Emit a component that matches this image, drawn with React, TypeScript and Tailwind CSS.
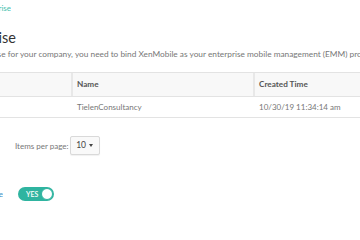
const font = "font-['Lato','Open_Sans',sans-serif]";

function Toggle() {
  return (
    <button className="flex h-[14px] w-[36px] items-center rounded-full bg-[#2fb4a0] pl-[8px] pr-[1px]">
      <span className="text-[7px] font-semibold leading-none text-white">YES</span>
      <span className="ml-auto size-[12px] rounded-full border border-[#2fb4a0] bg-white" />
    </button>
  );
}

export default function App() {
  return (
    <div className={`h-[240px] w-[360px] overflow-hidden bg-white text-[#666] ${font}`}>
      <div className="flex h-[16px] w-[11px] items-center justify-end overflow-hidden">
        <span className="whitespace-nowrap text-[8px] text-[#45bfae]">Settings &gt; Android Enterprise</span>
      </div>

      <div className="mt-[13px] flex h-[18px] w-[16px] items-center justify-end overflow-hidden">
        <h1 className="whitespace-nowrap text-[14.5px] leading-none text-[#333]">Android Enterprise</h1>
      </div>

      <p className="-ml-[88px] mt-[1px] h-[12px] whitespace-nowrap text-[8.3px] leading-[12px] text-[#777]">
        To use Android Enterprise for your company, you need to bind XenMobile as your enterprise mobile management (EMM) provider.
      </p>

      <div className="mt-[12px] text-[8px]">
        <div className="grid h-[25px] grid-cols-[71px_182px_1fr] border-y border-[#e3e3e3] bg-[#f8f8f8] text-[8.2px] font-bold text-[#555]">
          <div />
          <div className="flex items-center border-l-2 border-[#e8e8e8] pl-[4px]">Name</div>
          <div className="flex items-center border-l-2 border-[#e8e8e8] pl-[4px]">Created Time</div>
        </div>
        <div className="grid h-[21px] grid-cols-[73px_182px_1fr] border-b border-[#e3e3e3] text-[#777]">
          <div />
          <div className="flex items-center pl-[4px]">TielenConsultancy</div>
          <div className="flex items-center pl-[4px]">10/30/19 11:34:14 am</div>
        </div>
      </div>

      <div className="mt-[18px] flex items-center pl-[15px] text-[8px]">
        <span className="text-[#777]">Items per page:</span>
        <button className="ml-[1px] flex h-[19px] w-[30px] items-center justify-center gap-[3px] rounded-[2px] border border-[#d9d9d9] bg-[#f9f9f9] text-[8.5px] text-[#444] shadow-[0_1px_1px_rgba(0,0,0,0.06)]">
          10
          <span className="border-x-[2.5px] border-t-[3px] border-x-transparent border-t-[#444]" />
        </button>
      </div>

      <div className="mt-[32px] flex items-center">
        <div className="flex w-[3px] justify-end overflow-hidden">
          <span className="whitespace-nowrap text-[8px] text-[#3d8fc7]">Enable</span>
        </div>
        <div className="ml-[15px]">
          <Toggle />
        </div>
      </div>
    </div>
  );
}
